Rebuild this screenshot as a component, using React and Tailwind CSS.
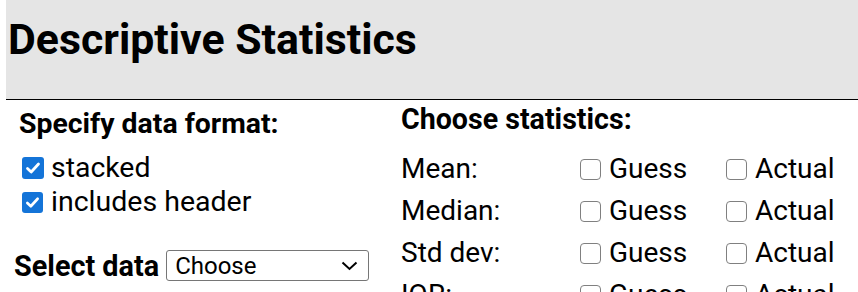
import React from "react";

function Box({ checked, size = 22 }) {
  return checked ? (
    <span
      className="inline-flex items-center justify-center rounded-[3px] bg-[#1474d8] shrink-0"
      style={{ width: size, height: size }}
    >
      <svg viewBox="0 0 16 16" width={size - 6} height={size - 6}>
        <path d="M2.5 8.5 L6.2 12 L13.5 4" fill="none" stroke="white" strokeWidth="2.8" strokeLinecap="round" strokeLinejoin="round" />
      </svg>
    </span>
  ) : (
    <span
      className="inline-block rounded-[4px] border-[1.5px] border-[#808080] bg-white shrink-0"
      style={{ width: size, height: size }}
    />
  );
}

const stats = ["Mean:", "Median:", "Std dev:", "IQR:"];

export default function App() {
  return (
    <div className="w-[858px] h-[292px] overflow-hidden bg-white text-black" style={{ fontFamily: "Roboto, sans-serif" }}>
      <div className="ml-[6px] h-[100px] bg-[#e5e5e5] border-b border-black pt-[15px] pl-[2px]">
        <h1 className="text-[42.8px] font-bold leading-[48px]">Descriptive Statistics</h1>
      </div>
      <div className="flex">
        <div className="w-[395px] shrink-0 pl-[14px]">
          <div className="pl-[5px] pt-[9px] text-[28.4px] font-bold leading-[30px]">Specify data format:</div>
          <div className="pl-[8px] mt-[12px] flex items-center gap-[7px] text-[28.4px] leading-[34px]">
            <Box checked />
            <span>stacked</span>
          </div>
          <div className="pl-[8px] flex items-center gap-[8px] text-[28.5px] leading-[34px]">
            <Box checked size={21} />
            <span>includes header</span>
          </div>
          <div className="mt-[31px] flex items-center gap-[7px]">
            <span className="text-[28.8px] font-bold leading-[30px]">Select data</span>
            <div className="w-[203px] h-[31px] border border-[#767676] rounded-[3px] flex items-center justify-between pl-[8px] pr-[10px]">
              <span className="text-[24px] leading-[28px]">Choose</span>
              <svg width="17" height="10" viewBox="0 0 17 10">
                <path d="M1.5 1.5 L8.5 8 L15.5 1.5" fill="none" stroke="black" strokeWidth="2" />
              </svg>
            </div>
          </div>
        </div>
        <div className="pl-[6px] pt-[4px]">
          <div className="text-[28.6px] font-bold leading-[30px]">Choose statistics:</div>
          <div className="mt-[14px] flex flex-col">
            {stats.map((s) => (
              <div key={s} className="flex items-center h-[42px] text-[28px]">
                <span className="w-[179px]">{s}</span>
                <span className="w-[146px] flex items-center gap-[8px]">
                  <Box size={21} />
                  <span>Guess</span>
                </span>
                <span className="flex items-center gap-[8px]">
                  <Box size={21} />
                  <span>Actual</span>
                </span>
              </div>
            ))}
          </div>
        </div>
      </div>
    </div>
  );
}
